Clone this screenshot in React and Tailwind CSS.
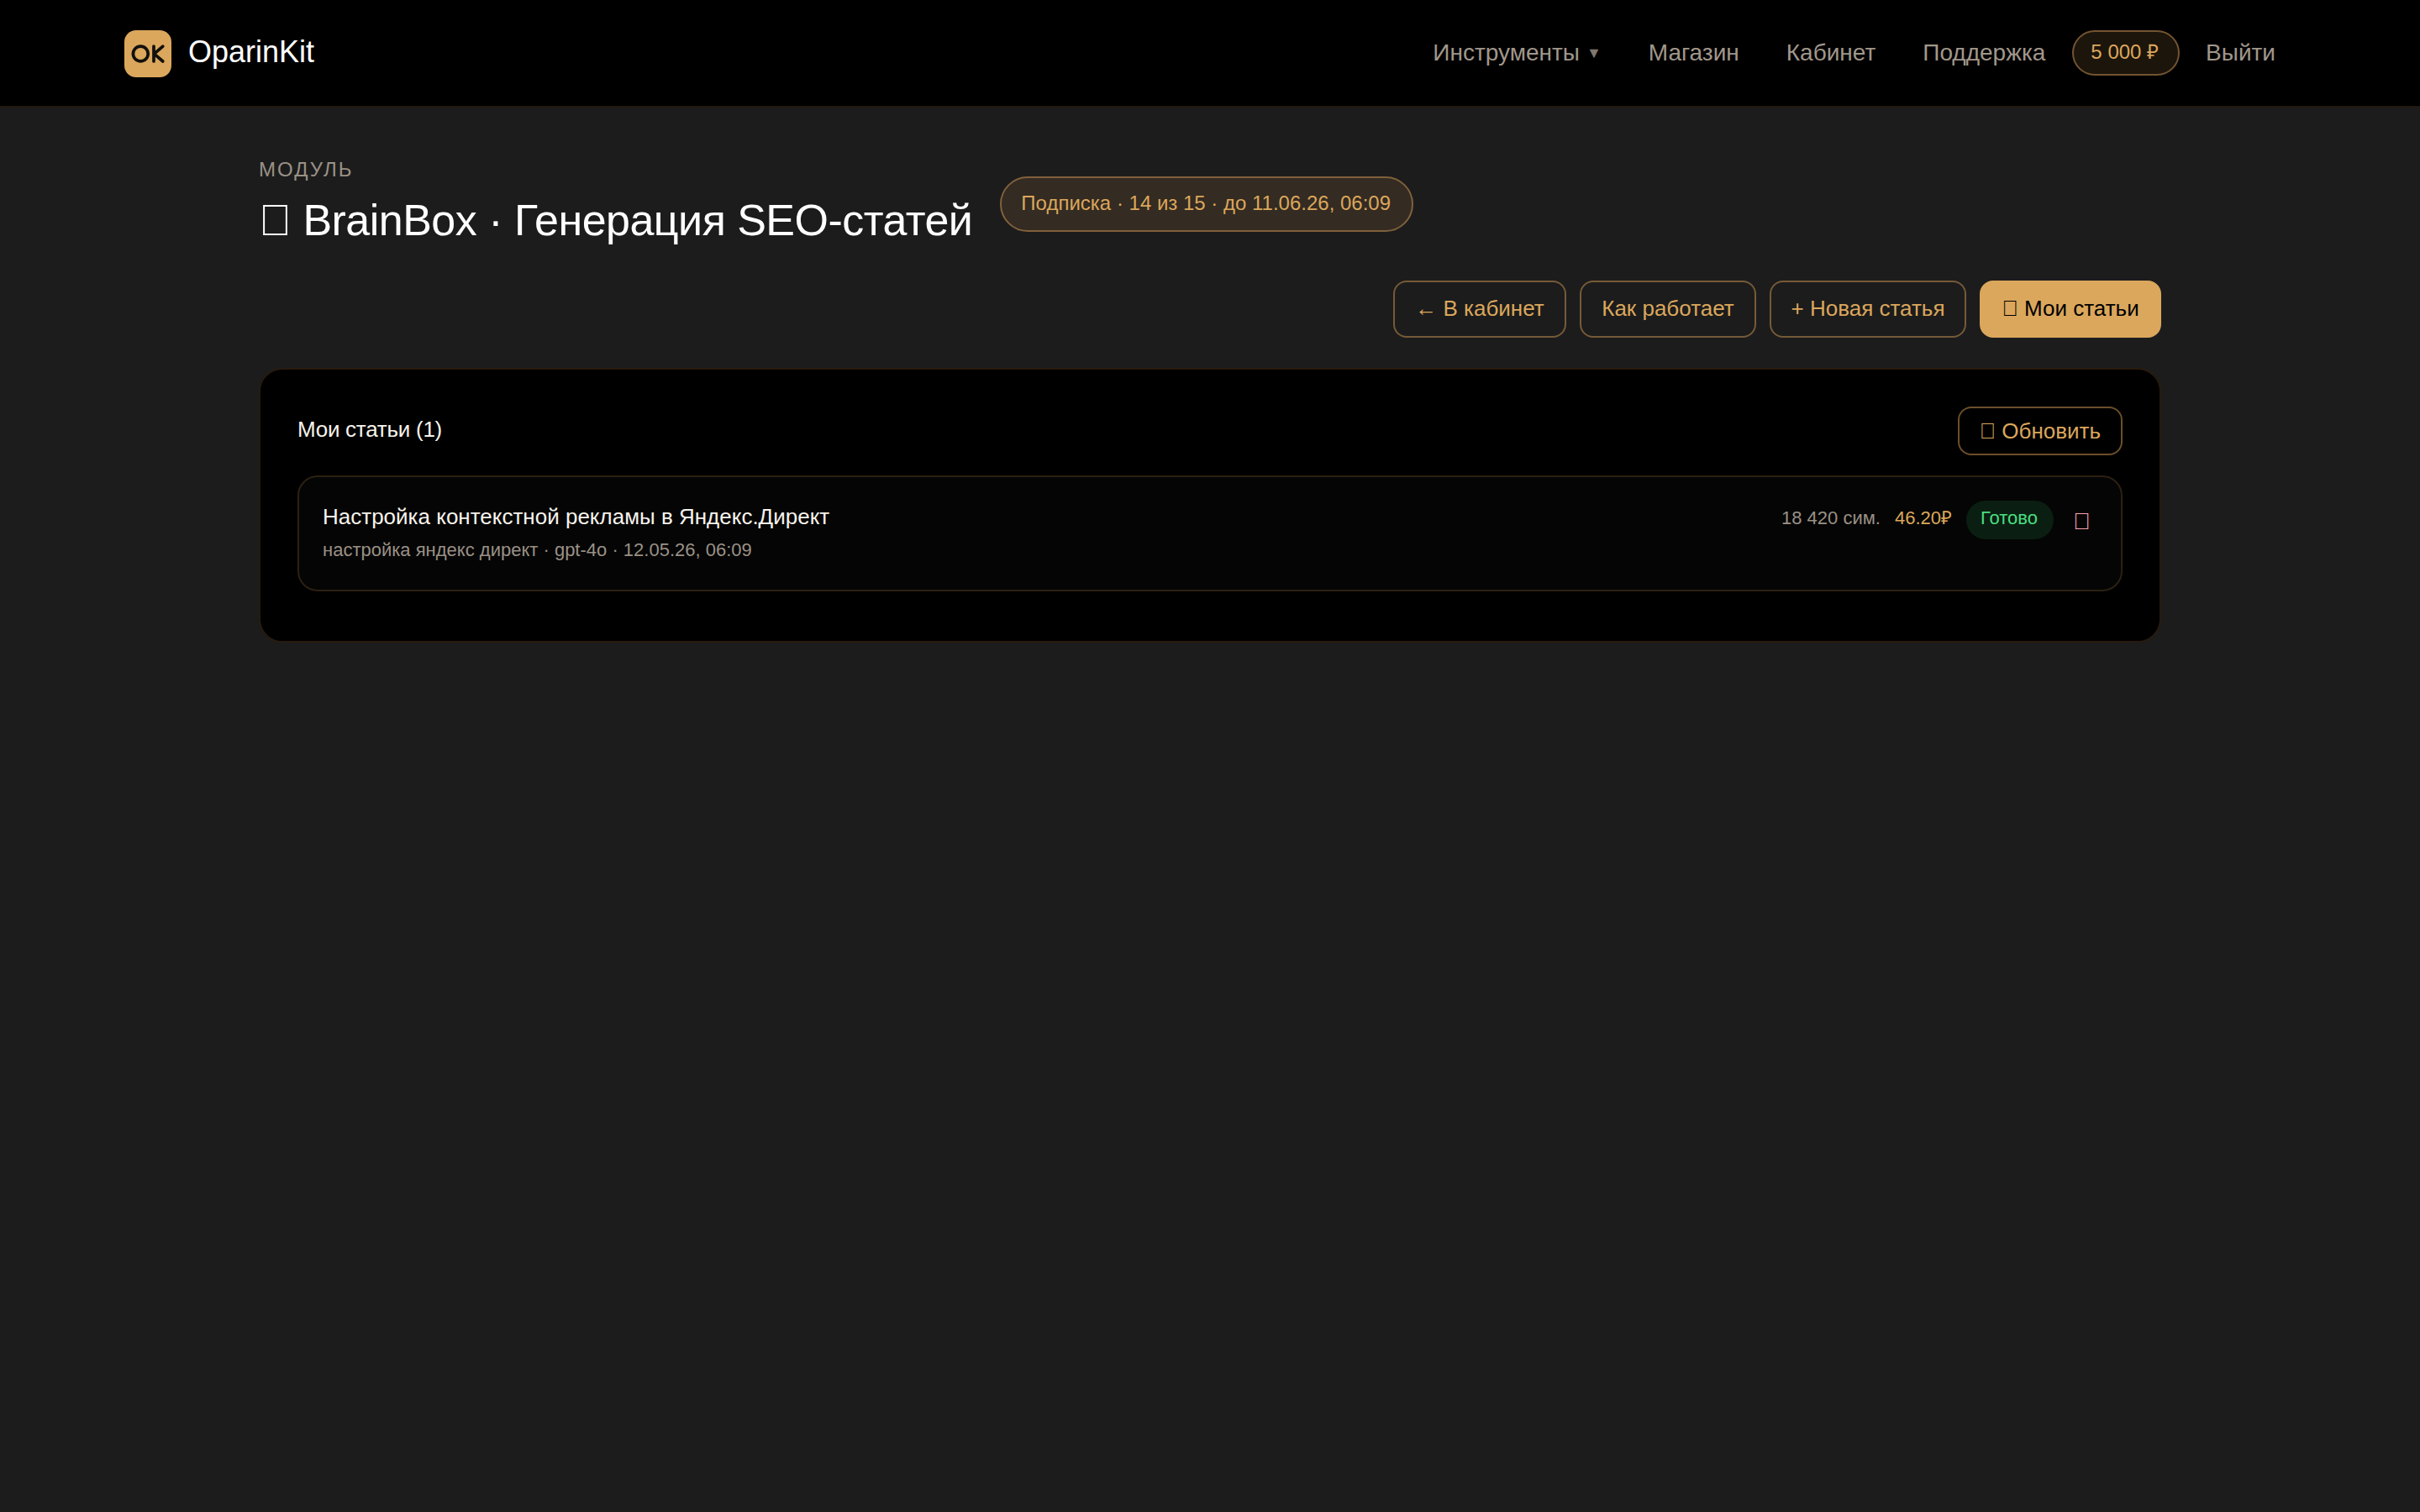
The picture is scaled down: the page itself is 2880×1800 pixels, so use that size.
// Private-use code point, shown as the font's empty box
const BOX = "\uE0F7";

const navItems = [
  { label: "Инструменты", hasMenu: true },
  { label: "Магазин" },
  { label: "Кабинет" },
  { label: "Поддержка" },
];

const actions = [
  { label: "← В кабинет", width: "w-[206px]" },
  { label: "Как работает", width: "w-[210px]" },
  { label: "+ Новая статья", width: "w-[234px]" },
  { label: `${BOX} Мои статьи`, width: "w-[216px]", active: true },
];

const articles = [
  {
    title: "Настройка контекстной рекламы в Яндекс.Директ",
    meta: "настройка яндекс директ · gpt-4o · 12.05.26, 06:09",
    size: "18 420 сим.",
    price: "46.20₽",
    status: "Готово",
  },
];

function Logo() {
  return (
    <svg className="size-14" viewBox="0 0 56 56" fill="none">
      <rect width="56" height="56" rx="14" fill="#dba75c" />
      <g stroke="#12100c" strokeWidth="3.7" strokeLinecap="round" strokeLinejoin="round">
        <circle cx="19.3" cy="28" r="8.9" />
        <path d="M35 19.1V37M45.8 19.1L35.5 28.1L45.8 37" />
      </g>
    </svg>
  );
}

function Header() {
  return (
    <header className="h-32 border-b-2 border-[#20180d] bg-black px-[148px]">
      <div className="flex h-[126px] items-center justify-between">
        <a className="flex items-center gap-5 pt-0.5">
          <Logo />
          <span className="pb-[5px] text-[36px] leading-[51px] text-white">OparinKit</span>
        </a>

        <nav className="flex items-center gap-2 text-[28px] text-[#a1978b]">
          {navItems.map((item) => (
            <a key={item.label} className="flex items-center gap-2 px-6 pb-px">
              {item.label}
              {item.hasMenu && <span className="text-[18px] leading-[42px] opacity-80">▼</span>}
            </a>
          ))}
          <span className="flex h-[54px] items-center rounded-full border-2 border-[#735431] bg-[#1c150c] pr-[23px] pb-[3px] pl-5 text-[24px] text-[#dba75c]">
            5 000 ₽
          </span>
          <a className="pr-6 pb-px pl-[23px]">Выйти</a>
        </nav>
      </div>
    </header>
  );
}

function ArticleRow({ article }) {
  return (
    <div className="flex h-[138px] items-start justify-between rounded-[24px] border-2 border-[#2c2012] bg-[#050505] px-7 pt-7">
      <div className="flex flex-col">
        <span className="text-[26px] leading-[38px] text-[#f7f3ec]">{article.title}</span>
        <span className="mt-1 text-[22px] leading-[33px] text-[#9a9186]">{article.meta}</span>
      </div>
      <div className="flex items-start gap-4 text-[22px] leading-[41px]">
        <span className="mr-px text-[#9a9186]">{article.size}</span>
        <span className="mr-px text-[#dba75c]">{article.price}</span>
        <span className="h-[46px] w-[104px] rounded-full bg-[#0a1f12] pr-0.5 text-center text-[#4ade80]">
          {article.status}
        </span>
        <button className="w-9 pr-px text-[28px] leading-[49px] text-[#fda4af]">{BOX}</button>
      </div>
    </div>
  );
}

export default function App() {
  return (
    <div className="min-h-[1800px] bg-[#1c1c1c] font-['Liberation_Sans',Arial,sans-serif]">
      <Header />

      <main className="mx-auto w-[2264px] pt-[54px]">
        {/* Module title and subscription badge */}
        <div className="flex items-start">
          <div>
            <p className="text-[24px] leading-[39px] tracking-[2px] text-[#9a9186]">МОДУЛЬ</p>
            <h1 className="mt-[9px] text-[52px] leading-[64px] tracking-[-0.01em] text-white">
              {BOX} BrainBox · Генерация SEO-статей
            </h1>
          </div>
          <span className="mt-7 ml-[33px] flex h-[66px] items-center rounded-full border-2 border-[#80613c] bg-[#342b22] pr-[25px] pb-[3px] pl-[23px] text-[24px] text-[#dba75c]">
            Подписка · 14 из 15 · до 11.06.26, 06:09
          </span>
        </div>

        {/* Page actions */}
        <div className="mt-10 flex justify-end gap-4">
          {actions.map((action) => (
            <button
              key={action.label}
              className={`h-[68px] rounded-[16px] border-2 pb-0.5 text-[26px] ${action.width} ${
                action.active
                  ? "border-[#dba75c] bg-[#dba75c] text-black"
                  : "border-[#765a38] text-[#dba75c]"
              }`}
            >
              {action.label}
            </button>
          ))}
        </div>

        <section className="mt-9 h-[327px] rounded-[28px] border-2 border-[#281b0e] bg-black px-11 pt-11">
          <div className="mb-6 flex items-center justify-between">
            <h2 className="pb-1 text-[26px] tracking-[-0.01em] text-[#f7f3ec]">Мои статьи (1)</h2>
            <button className="h-[58px] rounded-[16px] border-2 border-[#6b4f2b] px-6 text-[26px] text-[#dba75c]">
              {BOX} Обновить
            </button>
          </div>
          {articles.map((article) => (
            <ArticleRow key={article.title} article={article} />
          ))}
        </section>
      </main>
    </div>
  );
}
